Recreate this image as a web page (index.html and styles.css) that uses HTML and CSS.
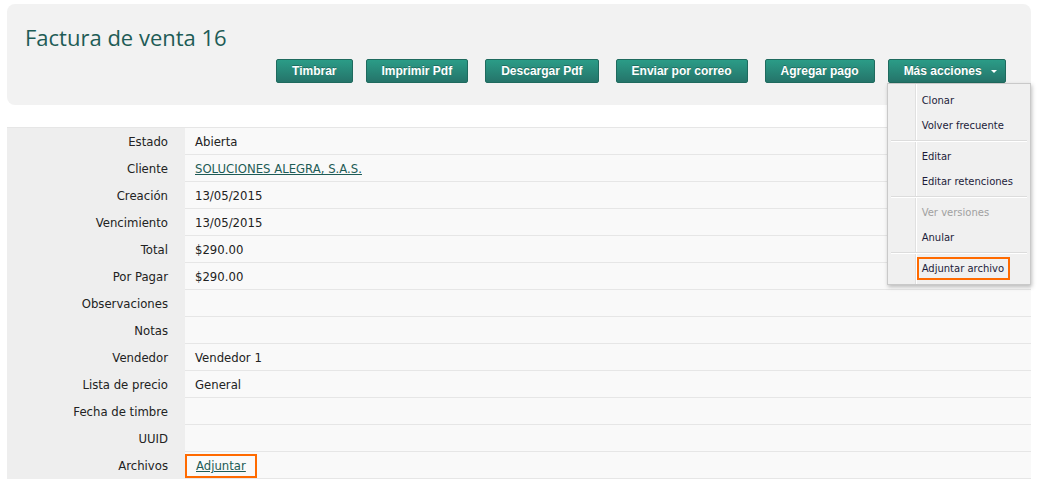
FILE: index.html
```html
<!DOCTYPE html>
<html lang="es">
<head>
  <meta charset="UTF-8" />
  <title>Factura de venta 16</title>
  <link rel="stylesheet" href="styles.css">
</head>
<body>
  <div class="page">
    <div class="header">
      <h1 class="title">Factura de venta 16</h1>
      <div class="actions">
        <button class="btn">Timbrar</button>
        <button class="btn">Imprimir Pdf</button>
        <button class="btn">Descargar Pdf</button>
        <button class="btn">Enviar por correo</button>
        <button class="btn">Agregar pago</button>
        <div class="more">
          <button class="btn btn-more">Más acciones <span class="caret"></span></button>
          <ul class="menu">
            <li>Clonar</li>
            <li>Volver frecuente</li>
            <li class="divider"></li>
            <li>Editar</li>
            <li>Editar retenciones</li>
            <li class="divider"></li>
            <li class="disabled">Ver versiones</li>
            <li>Anular</li>
            <li class="divider"></li>
            <li><span class="highlight">Adjuntar archivo</span></li>
          </ul>
        </div>
      </div>
    </div>

    <div class="details">
      <div class="label">Estado</div><div class="value">Abierta</div>
      <div class="label">Cliente</div><div class="value"><a href="#">SOLUCIONES ALEGRA, S.A.S.</a></div>
      <div class="label">Creación</div><div class="value">13/05/2015</div>
      <div class="label">Vencimiento</div><div class="value">13/05/2015</div>
      <div class="label">Total</div><div class="value">$290.00</div>
      <div class="label">Por Pagar</div><div class="value">$290.00</div>
      <div class="label">Observaciones</div><div class="value"></div>
      <div class="label">Notas</div><div class="value"></div>
      <div class="label">Vendedor</div><div class="value">Vendedor 1</div>
      <div class="label">Lista de precio</div><div class="value">General</div>
      <div class="label">Fecha de timbre</div><div class="value"></div>
      <div class="label">UUID</div><div class="value"></div>
      <div class="label">Archivos</div><div class="value"><a href="#" class="attach">Adjuntar</a></div>
    </div>
  </div>
</body>
</html>
```

FILE: styles.css
```css
body {
  margin: 0;
  font-family: "DejaVu Sans", Verdana, sans-serif;
  font-size: 11.7px;
  color: #222;
  background: #fff;
}

.page {
  padding: 4px 16px 0 7px;
}

.header {
  background: #f2f2f2;
  border-radius: 8px;
  height: 101px;
  box-sizing: border-box;
  padding: 18px 25px 0 18px;
}

.title {
  margin: 0;
  font-family: "Open Sans", sans-serif;
  font-weight: normal;
  font-size: 22px;
  line-height: 30px;
  color: #1e5c56;
}

.actions {
  display: flex;
  justify-content: flex-end;
  gap: 17px;
  margin-top: 7px;
}

.actions > .btn:first-child {
  margin-right: -4px;
}

.btn {
  height: 24px;
  padding: 0 15px;
  font-family: "Liberation Sans", Arial, sans-serif;
  font-weight: bold;
  font-size: 12px;
  color: #fff;
  text-shadow: 0 -1px 0 rgba(0,0,0,0.25);
  background: linear-gradient(#2b9c87, #25746a);
  border: 1px solid #1f6a5e;
  border-radius: 2px;
  cursor: pointer;
}

.more {
  position: relative;
  margin-left: -4px;
}

.btn-more {
  padding: 0 8px 0 15px;
}

.caret {
  display: inline-block;
  margin-left: 6px;
  vertical-align: middle;
  border-top: 3px solid #fff;
  border-left: 3px solid transparent;
  border-right: 3px solid transparent;
}

.menu {
  position: absolute;
  top: 24px;
  left: -1px;
  width: 144px;
  margin: 0;
  padding: 4px 0 3px;
  list-style: none;
  font-size: 10px;
  background: #f0f0f0 linear-gradient(90deg, transparent 27px, #e0e0e0 27px, #e0e0e0 28px, #fff 28px, #fff 29px, transparent 29px);
  border: 1px solid #c9c9c9;
  box-shadow: 1px 2px 4px rgba(0,0,0,0.25);
  box-sizing: border-box;
  z-index: 5;
}

.menu li {
  height: 25px;
  line-height: 25px;
  padding-left: 34px;
  color: #1c1c3a;
}

.menu li.disabled {
  color: #a0a0a0;
}

.menu li.divider {
  height: 1px;
  margin: 2px 3px;
  padding: 0;
  background: #dcdcdc;
  border-bottom: 1px solid #fff;
}

.highlight {
  display: inline-block;
  line-height: 19px;
  margin-left: -5px;
  padding: 0 4px 0 3px;
  border: 2px solid #ff6a00;
}

.details {
  display: grid;
  grid-template-columns: 178px 1fr;
  margin-top: 22px;
  border-top: 1px solid #e6e6e6;
}

.label {
  height: 26px;
  line-height: 28px;
  padding-right: 17px;
  text-align: right;
  background: #eeeeee;
  color: #222;
  border-bottom: 1px solid #eeeeee;
}

.value {
  height: 26px;
  line-height: 28px;
  padding-left: 10px;
  background: #f9f9f9;
  border-bottom: 1px solid #e6e6e6;
}

.value a {
  color: #1e5c56;
}

.attach {
  display: inline-block;
  line-height: 20px;
  margin-left: -10px;
  padding: 0 9px;
  border: 2px solid #ff6a00;
}
```
